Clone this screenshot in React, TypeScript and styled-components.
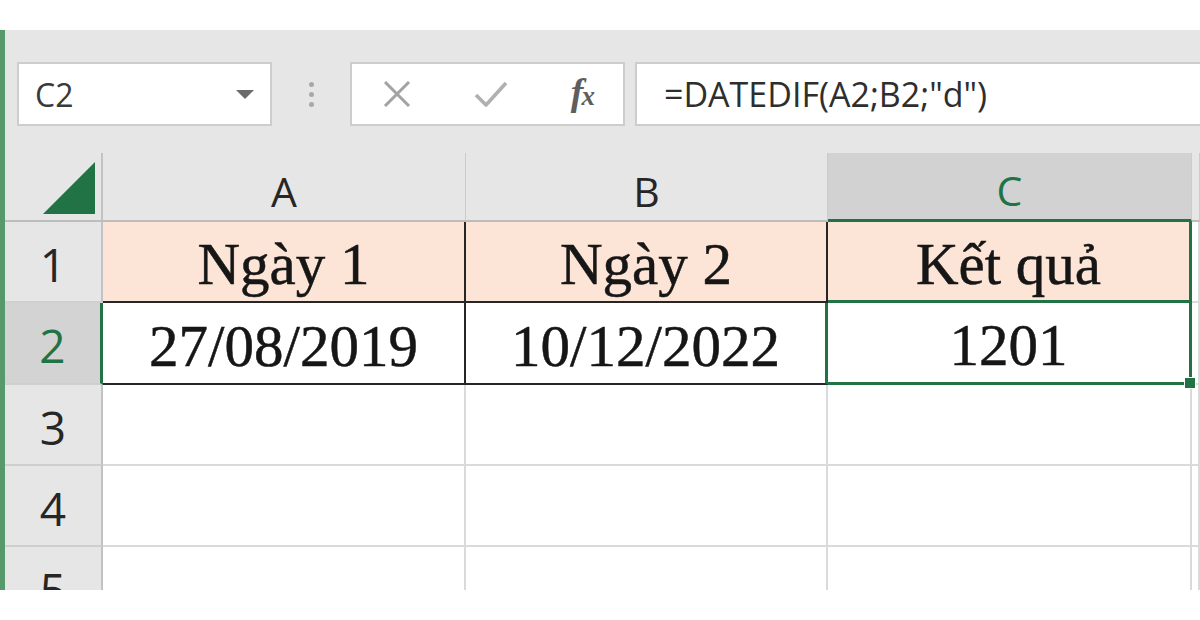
import styled, { createGlobalStyle } from 'styled-components';

const GlobalStyle = createGlobalStyle`
  html, body {
    margin: 0;
    padding: 0;
    background: #ffffff;
  }
  body {
    width: 1200px;
    height: 620px;
    overflow: hidden;
  }
`;

const GREEN = '#217346';
const GRID = '#dadada';
const INK = '#161616';

const Page = styled.div`
  width: 1200px;
  height: 620px;
  display: flex;
  flex-direction: column;
  background: #ffffff;
`;

const WhiteStrip = styled.div<{ $h: number }>`
  height: ${(p) => p.$h}px;
  flex: none;
`;

const Window = styled.div`
  height: 560px;
  flex: none;
  display: flex;
  flex-direction: column;
  background: #e6e6e6;
  border-left: 5px solid #56996c;
  overflow: hidden;
`;

const FormulaBar = styled.div`
  height: 123px;
  flex: none;
  box-sizing: border-box;
  padding: 32px 0 0 12px;
  display: flex;
  align-items: flex-start;
`;

const Box = styled.div<{ $w?: number }>`
  height: 64px;
  box-sizing: border-box;
  background: #ffffff;
  border: 2px solid #cdcdcd;
  display: flex;
  align-items: center;
  ${(p) => (p.$w ? `width: ${p.$w}px; flex: none;` : 'flex: 1;')}
`;

const NameText = styled.span`
  flex: 1;
  padding-left: 16px;
  font-family: 'Open Sans', sans-serif;
  font-size: 32px;
  color: #3a3a3a;
`;

const Caret = styled.span`
  width: 0;
  height: 0;
  margin-right: 16px;
  border-left: 9px solid transparent;
  border-right: 9px solid transparent;
  border-top: 9px solid #6b6b6b;
`;

const Grip = styled.div`
  width: 78px;
  height: 64px;
  flex: none;
  display: flex;
  flex-direction: column;
  align-items: center;
  justify-content: center;
  gap: 5px;

  span {
    width: 5px;
    height: 5px;
    border-radius: 50%;
    background: #a8a8a8;
  }
`;

const ActionBox = styled(Box)`
  padding: 0 30px 0 31px;
  justify-content: space-between;
`;

const Fx = styled.span`
  font-family: 'Liberation Serif', serif;
  font-style: italic;
  font-weight: bold;
  font-size: 38px;
  color: #5e5e5e;
  letter-spacing: -2px;
  margin-top: -4px;

  small {
    font-size: 27px;
  }
`;

const FormulaInput = styled(Box)`
  margin-left: 10px;
  border-right: none;
  padding-left: 27px;
  font-family: 'Open Sans', sans-serif;
  font-size: 34px;
  color: #2e2e2e;
`;

const Sheet = styled.div`
  flex: none;
  display: grid;
  grid-template-columns: 98px 363px 362px 364px 1fr;
  grid-template-rows: 69px 81px 82px 81px 81px 81px;
`;

const Corner = styled.div`
  box-sizing: border-box;
  border-right: 2px solid #c2c2c2;
  border-bottom: 2px solid #bdbdbd;
  display: flex;
  align-items: flex-end;
  justify-content: flex-end;
  padding: 0 6px 6px 0;
`;

const ColHead = styled.div<{ $active?: boolean }>`
  box-sizing: border-box;
  display: flex;
  align-items: center;
  justify-content: center;
  padding-top: 8px;
  font-family: 'Open Sans', sans-serif;
  font-size: 41px;
  background: ${(p) => (p.$active ? '#d2d2d2' : '#e6e6e6')};
  color: ${(p) => (p.$active ? GREEN : '#262626')};
  border-right: 1px solid #cbcbcb;
  border-bottom: ${(p) => (p.$active ? `3px solid ${GREEN}` : '2px solid #bdbdbd')};
`;

const RowHead = styled.div<{ $active?: boolean }>`
  box-sizing: border-box;
  display: flex;
  align-items: center;
  justify-content: center;
  padding-top: 4px;
  font-family: 'Open Sans', sans-serif;
  font-size: 46px;
  background: ${(p) => (p.$active ? '#d3d3d3' : '#e6e6e6')};
  color: ${(p) => (p.$active ? GREEN : '#262626')};
  border-right: ${(p) => (p.$active ? `3px solid ${GREEN}` : '2px solid #c2c2c2')};
  border-bottom: 2px solid #cfcfcf;
`;

const Cell = styled.div<{ $fill?: string; $right?: string; $bottom?: string }>`
  position: relative;
  box-sizing: border-box;
  display: flex;
  align-items: center;
  justify-content: center;
  padding-top: 6px;
  font-family: 'Liberation Serif', 'Times New Roman', serif;
  font-size: 59px;
  color: ${INK};
  -webkit-text-stroke: 0.5px ${INK};
  background: ${(p) => p.$fill ?? '#ffffff'};
  border-right: ${(p) => p.$right ?? `2px solid ${GRID}`};
  border-bottom: ${(p) => p.$bottom ?? `2px solid ${GRID}`};
`;

const FillHandle = styled.span`
  position: absolute;
  right: -7px;
  bottom: -7px;
  width: 10px;
  height: 10px;
  background: ${GREEN};
  border: 1px solid #ffffff;
  z-index: 2;
`;

const PEACH = '#fce4d6';
const BLACK = '2px solid #262626';
const SEL = `3px solid ${GREEN}`;

const CancelIcon = () => (
  <svg width="28" height="26" viewBox="0 0 28 26">
    <path d="M2 1 L26 25 M26 1 L2 25" stroke="#a3a3a3" strokeWidth="3" fill="none" />
  </svg>
);

const EnterIcon = () => (
  <svg width="34" height="26" viewBox="0 0 34 26">
    <path
      d="M2 14 L12 24 L32 2"
      stroke="#b0b0b0"
      strokeWidth="3.6"
      strokeLinejoin="round"
      fill="none"
    />
  </svg>
);

export default function App() {
  return (
    <Page>
      <GlobalStyle />
      <WhiteStrip $h={30} />
      <Window>
        <FormulaBar>
          <Box $w={255}>
            <NameText>C2</NameText>
            <Caret />
          </Box>
          <Grip>
            <span />
            <span />
            <span />
          </Grip>
          <ActionBox $w={275}>
            <CancelIcon />
            <EnterIcon />
            <Fx>
              f<small>x</small>
            </Fx>
          </ActionBox>
          <FormulaInput>=DATEDIF(A2;B2;"d")</FormulaInput>
        </FormulaBar>

        <Sheet>
          <Corner>
            <svg width="52" height="52" viewBox="0 0 52 52">
              <polygon points="0,52 52,0 52,52" fill={GREEN} />
            </svg>
          </Corner>
          <ColHead>A</ColHead>
          <ColHead>B</ColHead>
          <ColHead $active>C</ColHead>
          <ColHead />

          <RowHead>1</RowHead>
          <Cell $fill={PEACH} $right={BLACK} $bottom={BLACK}>Ngày 1</Cell>
          <Cell $fill={PEACH} $right={BLACK} $bottom={BLACK}>Ngày 2</Cell>
          <Cell $fill={PEACH} $right={SEL} $bottom={SEL}>Kết quả</Cell>
          <Cell />

          <RowHead $active>2</RowHead>
          <Cell $right={BLACK} $bottom={BLACK}>27/08/2019</Cell>
          <Cell $right={SEL} $bottom={BLACK}>10/12/2022</Cell>
          <Cell $right={SEL} $bottom={SEL}>
            1201
            <FillHandle />
          </Cell>
          <Cell />

          {[3, 4, 5].map((n) => (
            <>
              <RowHead key={`h${n}`}>{n}</RowHead>
              <Cell key={`a${n}`} />
              <Cell key={`b${n}`} />
              <Cell key={`c${n}`} />
              <Cell key={`d${n}`} />
            </>
          ))}
        </Sheet>
      </Window>
      <WhiteStrip $h={30} />
    </Page>
  );
}
